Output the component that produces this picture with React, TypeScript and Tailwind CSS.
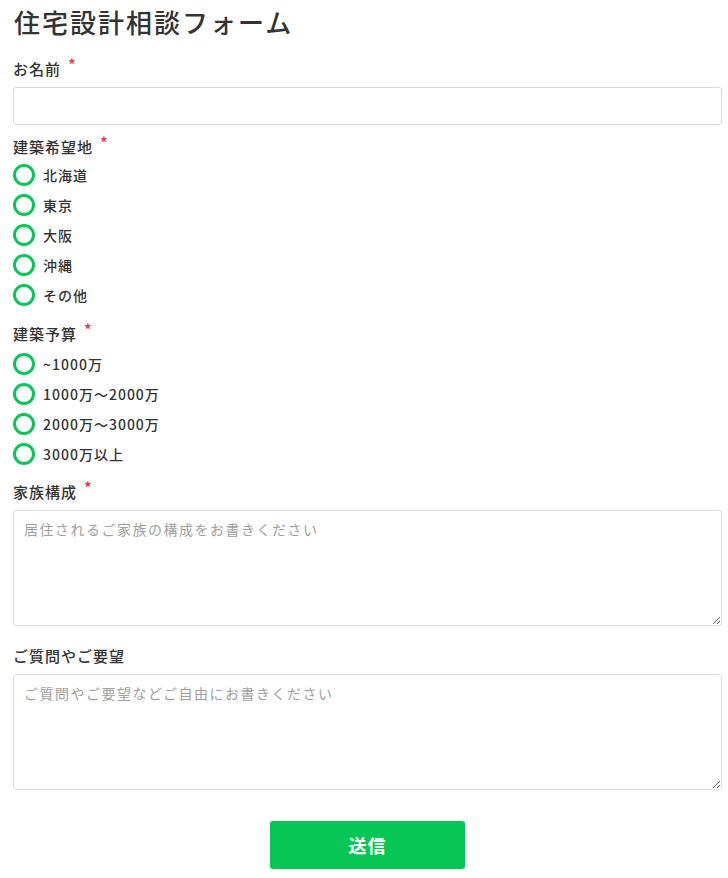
const font = { fontFamily: '"Noto Sans CJK JP", "Noto Sans", sans-serif' };

function Label({ text, required, className = "" }: { text: string; required?: boolean; className?: string }) {
  return (
    <div className={`flex h-[20px] items-center text-[15px] font-medium tracking-[1px] text-[#333] ${className}`}>
      <span>{text}</span>
      {required && <span className="relative -top-[5px] ml-[7px] text-[16px] text-[#e2374b]">*</span>}
    </div>
  );
}

function Radio({ name, label }: { name: string; label: string }) {
  return (
    <label className="flex h-[30px] items-center gap-[8px]">
      <input type="radio" name={name} className="peer sr-only" />
      <span className="box-border h-[22px] w-[22px] rounded-full border-[3px] border-[#06c755] bg-white" />
      <span className="text-[14px] font-medium tracking-[1px] text-[#333]">{label}</span>
    </label>
  );
}

const areas = ["北海道", "東京", "大阪", "沖縄", "その他"];
const budgets = ["~1000万", "1000万～2000万", "2000万～3000万", "3000万以上"];

export default function App() {
  return (
    <main className="min-h-screen bg-white pl-[13px] pr-[6px]" style={font}>
      <h1 className="flex h-[43px] items-center pl-px text-[26px] font-medium tracking-[2px] text-[#333]">
        住宅設計相談フォーム
      </h1>

      <Label text="お名前" required className="mt-[16px]" />
      <input
        type="text"
        className="mt-[8px] block h-[38px] w-full rounded-[3px] border border-[#dcdcdc] px-[10px] text-[14px] outline-none"
      />

      <Label text="建築希望地" required className="mt-[12px]" />
      <div className="mt-[3px] flex flex-col">
        {areas.map((a) => (
          <Radio key={a} name="area" label={a} />
        ))}
      </div>

      <Label text="建築予算" required className="mt-[14px]" />
      <div className="mt-[5px] flex flex-col">
        {budgets.map((b) => (
          <Radio key={b} name="budget" label={b} />
        ))}
      </div>

      <Label text="家族構成" required className="mt-[13px]" />
      <textarea
        placeholder="居住されるご家族の構成をお書きください"
        className="mt-[8px] block h-[116px] w-full rounded-[3px] border border-[#dcdcdc] px-[10px] py-[8px] text-[14px] tracking-[1.5px] outline-none placeholder:text-[#a0a0a0]"
      />

      <Label text="ご質問やご要望" className="mt-[20px]" />
      <textarea
        placeholder="ご質問やご要望などご自由にお書きください"
        className="mt-[8px] block h-[116px] w-full rounded-[3px] border border-[#dcdcdc] px-[10px] py-[8px] text-[14px] tracking-[1.5px] outline-none placeholder:text-[#a0a0a0]"
      />

      <div className="mt-[31px] flex justify-center">
        <button className="h-[48px] w-[195px] rounded-[3px] bg-[#06c755] text-[18px] font-bold tracking-[1px] text-white">
          送信
        </button>
      </div>
    </main>
  );
}
